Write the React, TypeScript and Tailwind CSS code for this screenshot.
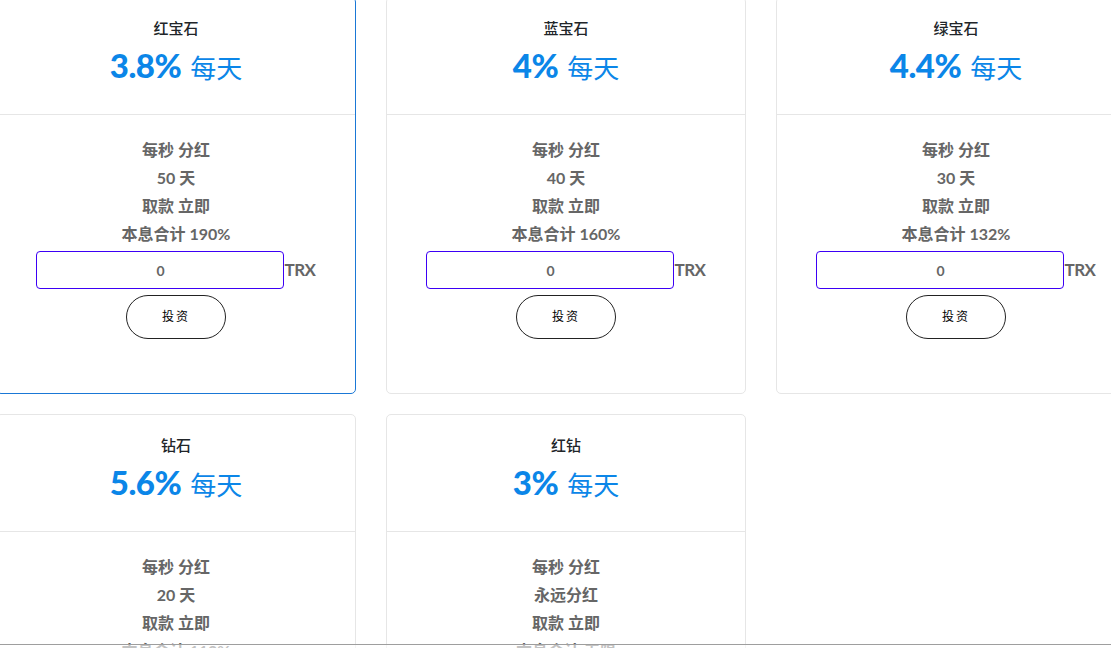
import React from "react";

type Plan = {
  name: string;
  rate: string;
  period: string;
  total?: string;
};

const plans: Plan[] = [
  { name: "红宝石", rate: "3.8%", period: "50 天", total: "本息合计 190%" },
  { name: "蓝宝石", rate: "4%", period: "40 天", total: "本息合计 160%" },
  { name: "绿宝石", rate: "4.4%", period: "30 天", total: "本息合计 132%" },
  { name: "钻石", rate: "5.6%", period: "20 天", total: "本息合计 112%" },
  { name: "红钻", rate: "3%", period: "永远分红", total: "本息合计 无限" },
];

const font = { fontFamily: "Lato, 'Noto Sans CJK SC', sans-serif" };

function Card({ plan, active }: { plan: Plan; active?: boolean }) {
  return (
    <div
      className={`w-[360px] h-[397px] shrink-0 rounded-[5px] border bg-white flex flex-col ${
        active ? "border-[#1a78d6]" : "border-[#e6e6e6]"
      }`}
    >
      <div className="h-[117px] border-b border-[#e6e6e6] flex flex-col items-center pt-[20px]">
        <div className="text-[15px] leading-[20px] font-medium text-[#212529]">{plan.name}</div>
        <div className="mt-[8px] h-[40px] flex items-center text-[#0b86e8]">
          <span className="text-[33px] font-black tracking-[-0.5px]">{plan.rate}</span>
          <span className="ml-[9px] text-[26px] font-normal" style={{ fontFamily: "'Noto Sans CJK SC', sans-serif" }}>
            每天
          </span>
        </div>
      </div>
      <div className="flex flex-col items-center pt-[21px] text-[#666] font-bold text-[16px] leading-[28px]">
        <div>每秒 分红</div>
        <div>{plan.period}</div>
        <div>取款 立即</div>
        <div>{plan.total}</div>
        <div className="mt-[3px] flex items-center">
          <input
            readOnly
            value="0"
            className="w-[248px] h-[38px] rounded-[4px] border border-[#3d00f5] text-center text-[14px] font-bold text-[#666] outline-none bg-white"
            style={font}
          />
          <span className="text-[17px] font-bold text-[#666] tracking-[-0.5px]">TRX</span>
        </div>
        <button
          className="mt-[6px] w-[100px] h-[44px] rounded-[22px] border border-[#222] bg-white text-[12px] font-normal text-black tracking-[2px]"
          style={font}
        >
          投资
        </button>
      </div>
    </div>
  );
}

export default function App() {
  return (
    <div className="relative w-[1111px] h-[648px] overflow-hidden bg-white" style={font}>
      <div className="ml-[-4px] mt-[-3px] flex flex-col gap-[20px]">
        <div className="flex gap-[30px]">
          <Card plan={plans[0]} active />
          <Card plan={plans[1]} />
          <Card plan={plans[2]} />
        </div>
        <div className="flex gap-[30px]">
          <Card plan={plans[3]} />
          <Card plan={plans[4]} />
        </div>
      </div>
      <div className="absolute left-0 right-0 top-[644px] h-[1px] bg-[#9e9e9e]" />
      <div className="absolute left-0 right-0 top-[645px] h-[3px] bg-white/60" />
    </div>
  );
}
